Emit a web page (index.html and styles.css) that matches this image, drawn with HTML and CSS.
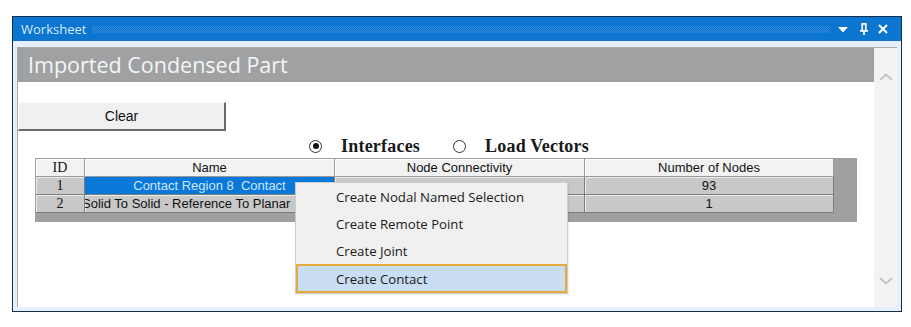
FILE: index.html
```html
<!DOCTYPE html>
<html>
<head>
<meta charset="utf-8">
<link rel="stylesheet" href="styles.css">
</head>
<body>
<div class="frame">
  <div class="titlebar">
    <span class="title">Worksheet</span>
    <span class="dots"></span>
    <span class="tb-icons">
      <svg class="ic-drop" width="10" height="6" viewBox="0 0 10 6"><polygon points="0,0 10,0 5,5.5" fill="#ffffff"/></svg>
      <svg class="ic-pin" width="10" height="12" viewBox="0 0 10 12"><path d="M2.5 0.8 H7.5 M3.2 0.8 V7.5 M6.8 0.8 V7.5 M1 7.8 H9 M5 7.8 V12" stroke="#ffffff" stroke-width="1.7" fill="none"/></svg>
      <svg class="ic-close" width="10" height="10" viewBox="0 0 10 10"><path d="M1 1 L9 9 M9 1 L1 9" stroke="#ffffff" stroke-width="2" fill="none"/></svg>
    </span>
  </div>
  <div class="panel">
    <div class="main">
      <div class="header">Imported Condensed Part</div>
      <div class="body">
        <button class="clear">Clear</button>
        <div class="radios">
          <span class="radio checked"></span><span class="rlabel">Interfaces</span>
          <span class="radio"></span><span class="rlabel">Load Vectors</span>
        </div>
        <div class="grid-wrap">
          <div class="grid">
            <div class="cell head id">ID</div>
            <div class="cell head">Name</div>
            <div class="cell head">Node Connectivity</div>
            <div class="cell head">Number of Nodes</div>
            <div class="cell id">1</div>
            <div class="cell selected">Contact Region 8&nbsp;&nbsp;Contact</div>
            <div class="cell"></div>
            <div class="cell">93</div>
            <div class="cell id">2</div>
            <div class="cell clip"><span class="shift">Solid To Solid - Reference To Planar</span></div>
            <div class="cell"></div>
            <div class="cell">1</div>
          </div>
        </div>
      </div>
    </div>
    <div class="vscroll">
      <svg width="14" height="8" viewBox="0 0 14 8"><polyline points="1,7 7,1.5 13,7" stroke="#c4c4c4" stroke-width="2" fill="none"/></svg>
      <svg width="14" height="8" viewBox="0 0 14 8"><polyline points="1,1 7,6.5 13,1" stroke="#c4c4c4" stroke-width="2" fill="none"/></svg>
    </div>
  </div>
  <div class="menu">
    <div class="item">Create Nodal Named Selection</div>
    <div class="item">Create Remote Point</div>
    <div class="item">Create Joint</div>
    <div class="item hot">Create Contact</div>
  </div>
</div>
</body>
</html>
```

FILE: styles.css
```css
* { box-sizing: border-box; }
html, body { margin: 0; padding: 0; background: #ffffff; }
body { width: 911px; height: 327px; overflow: hidden; }

.frame {
  position: relative;
  margin: 16px 0 0 12px;
  width: 890px;
  height: 296px;
  border: 1px solid #12304f;
  background: #e6f0fa;
  display: flex;
  flex-direction: column;
}

.titlebar {
  height: 24px;
  background: #0b75d0;
  display: flex;
  align-items: center;
  padding: 0 0 0 8px;
}
.title {
  font-family: "Open Sans", sans-serif;
  font-size: 13px;
  color: #d6ebff;
}
.dots {
  flex: 1;
  height: 7px;
  margin: 0 8px 0 6px;
  background: repeating-conic-gradient(#2f89d8 0 25%, transparent 0 50%) 0 0 / 2px 2px;
}
.tb-icons {
  display: flex;
  align-items: center;
  padding-right: 13px;
}
.ic-drop { margin-right: 11px; margin-top: 2px; }
.ic-pin { margin-right: 9px; }

.panel {
  flex: 1;
  margin: 6px 4px 4px 4px;
  border-top: 1px solid #a8a8a8;
  border-left: 1px solid #a8a8a8;
  background: #ffffff;
  display: flex;
}
.main { flex: 1; display: flex; flex-direction: column; }
.header {
  height: 34px;
  background: #9fa1a3;
  color: #f5f5f5;
  font-family: "Open Sans", sans-serif;
  font-size: 21.5px;
  line-height: 34px;
  padding-left: 10px;
}
.body { padding-top: 20px; display: flex; flex-direction: column; align-items: flex-start; }

.clear {
  width: 208px;
  height: 29px;
  margin: 0;
  padding: 0;
  background: #f0f0f0;
  border-style: solid;
  border-width: 1px 2px 2px 1px;
  border-color: #ffffff #6b6b6b #6b6b6b #ffffff;
  font-family: "Liberation Sans", Arial, sans-serif;
  font-size: 14px;
  color: #111;
}

.radios {
  margin: 7px 0 0 17px;
  width: 828px;
  height: 16px;
  display: flex;
  align-items: center;
  justify-content: center;
}
.radio {
  width: 13px;
  height: 13px;
  border: 1px solid #333;
  border-radius: 50%;
  background: #fff;
  display: flex;
  align-items: center;
  justify-content: center;
  margin-right: 19px;
}
.radio.checked::after {
  content: "";
  width: 6px;
  height: 6px;
  border-radius: 50%;
  background: #111;
}
.rlabel {
  font-family: "Liberation Serif", "Times New Roman", serif;
  font-weight: bold;
  font-size: 18px;
  letter-spacing: 0.2px;
  color: #1a1a1a;
  margin-right: 33px;
}
.rlabel:last-child { margin-right: 0; }

.grid-wrap {
  margin: 4px 0 0 17px;
  width: 822px;
  height: 64px;
  background: #a0a0a0;
  padding: 1px 0 0 1px;
}
.grid {
  display: grid;
  grid-template-columns: 49px 250px 250px 249px;
  grid-template-rows: 18px 18px 18px;
}
.cell {
  background: #c8c8c8;
  border-right: 1px solid #7c7c7c;
  border-bottom: 1px solid #7c7c7c;
  box-shadow: inset 1px 1px 0 #ececec;
  font-family: "Liberation Sans", Tahoma, sans-serif;
  font-size: 13px;
  color: #111;
  display: flex;
  align-items: center;
  justify-content: center;
  white-space: nowrap;
  overflow: hidden;
}
.cell.id { font-family: "Liberation Serif", "Times New Roman", serif; font-size: 14px; }
.cell.head { background: #f2f2f2; box-shadow: inset 1px 1px 0 #ffffff; border-color: #9a9a9a; }
.cell.selected { background: #0a78d8; color: #cfe6ff; box-shadow: none; }
.cell.clip { justify-content: flex-start; }
.shift { margin-left: -3px; }

.vscroll {
  width: 23px;
  background: #f3f3f3;
  display: flex;
  flex-direction: column;
  align-items: center;
  justify-content: space-between;
  padding: 25px 0 22px 0;
}

.menu {
  position: absolute;
  left: 282px;
  top: 165px;
  width: 273px;
  height: 112px;
  background: #f0f0f0;
  border: 1px solid #cdcdcd;
  box-shadow: 1px 1px 2px rgba(0,0,0,0.08);
}
.item {
  height: 27px;
  border: 2px solid transparent;
  padding-left: 38px;
  font-family: "Open Sans", sans-serif;
  font-size: 13.2px;
  color: #1a1a1a;
  display: flex;
  align-items: center;
}
.item.hot {
  background: #c9ddf3;
  border-color: #e6a93c;
  height: 29px;
}
```
